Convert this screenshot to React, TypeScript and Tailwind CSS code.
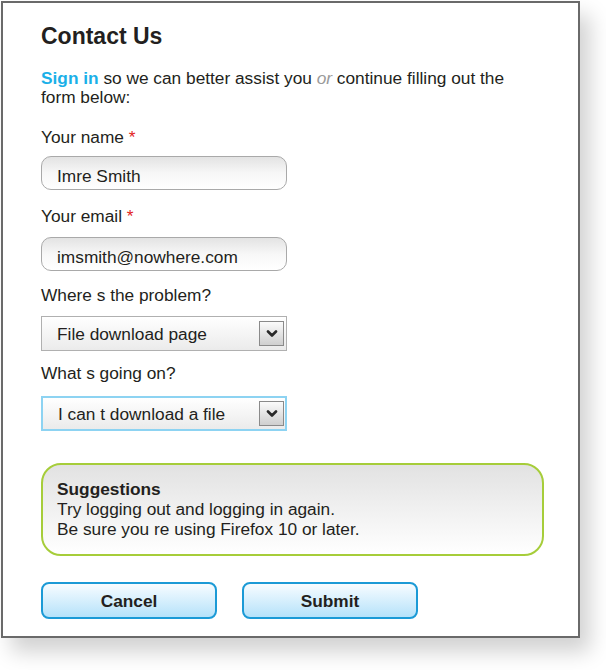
import React from 'react';

const font = { fontFamily: '"Liberation Sans", Arial, Helvetica, sans-serif' };

function Label({ text, required }: { text: string; required?: boolean }) {
  return (
    <div className="text-[17.3px] leading-[20px] text-[#231f20]">
      {text}
      {required && <span className="text-[#e2231a]"> *</span>}
    </div>
  );
}

function TextBox({ value, className }: { value: string; className?: string }) {
  return (
    <div
      className={`w-[246px] h-[34px] rounded-[10px] border border-[#a9a9a9] bg-gradient-to-b from-[#e3e3e3] via-[#f7f7f7] to-white pl-[15px] pt-[9px] text-[17.3px] leading-[20px] text-[#231f20] ${className ?? ''}`}
    >
      {value}
    </div>
  );
}

function Chevron() {
  return (
    <svg width="12" height="8" viewBox="0 0 12 8">
      <path d="M2 1.5 L6 5.5 L10 1.5" fill="none" stroke="#2a2a2a" strokeWidth="2.6" strokeLinecap="round" strokeLinejoin="round" />
    </svg>
  );
}

function SelectBox({ value, active, className }: { value: string; active?: boolean; className?: string }) {
  return (
    <div
      className={`w-[246px] h-[35px] flex items-center justify-between bg-gradient-to-b from-white to-[#ebebeb] pl-[15px] ${
        active ? 'border-2 border-[#8dd3f2] pr-[1px]' : 'border border-[#b0b0b0] pr-[2px]'
      } ${className ?? ''}`}
    >
      <span className="text-[17.3px] leading-[20px] text-[#231f20]">{value}</span>
      <div className="w-[25px] h-[25px] flex items-center justify-center border border-[#8a8a8a] bg-gradient-to-b from-[#fbfbfb] to-[#cfcfcf]">
        <Chevron />
      </div>
    </div>
  );
}

function Button({ label }: { label: string }) {
  return (
    <button className="w-[176px] h-[37px] rounded-[8px] border-2 border-[#1b9ad6] bg-gradient-to-b from-[#f7fcff] to-[#b5e2fa] text-[17.3px] leading-[20px] font-bold text-[#231f20]">
      {label}
    </button>
  );
}

export default function App() {
  return (
    <div className="w-[606px] h-[670px] bg-white overflow-hidden pt-px pl-px" style={font}>
      <div className="w-[579px] h-[637px] border-2 border-[#6a6a6a] bg-white shadow-[10px_14px_20px_rgba(0,0,0,0.18)] pl-[38px] pt-[19px]">
        <h1 className="text-[23px] leading-[28px] font-bold text-[#231f20]">Contact Us</h1>

        <p className="mt-[19px] w-[480px] text-[17.3px] leading-[19px] text-[#231f20]">
          <span className="font-bold text-[#1ab0e8]">Sign in</span> so we can better assist you{' '}
          <span className="italic text-[#9a9a9a]">or</span> continue filling out the form below:
        </p>

        <div className="mt-[20px]">
          <Label text="Your name" required />
          <TextBox value="Imre Smith" className="mt-[9px]" />
        </div>

        <div className="mt-[16px]">
          <Label text="Your email" required />
          <TextBox value="imsmith@nowhere.com" className="mt-[11px]" />
        </div>

        <div className="mt-[14px]">
          <Label text="Where s the problem?" />
          <SelectBox value="File download page" className="mt-[11px]" />
        </div>

        <div className="mt-[12px]">
          <Label text="What s going on?" />
          <SelectBox value="I can t download a file" active className="mt-[13px]" />
        </div>

        <div className="mt-[32px] w-[503px] h-[93px] rounded-[20px] border-2 border-[#a6cd3a] bg-gradient-to-b from-[#e2e2e2] to-white pl-[14px] pt-[14px] text-[17.3px] leading-[20px] text-[#231f20]">
          <div className="font-bold">Suggestions</div>
          <div>Try logging out and logging in again.</div>
          <div>Be sure you re using Firefox 10 or later.</div>
        </div>

        <div className="mt-[26px] flex gap-[25px]">
          <Button label="Cancel" />
          <Button label="Submit" />
        </div>
      </div>
    </div>
  );
}
